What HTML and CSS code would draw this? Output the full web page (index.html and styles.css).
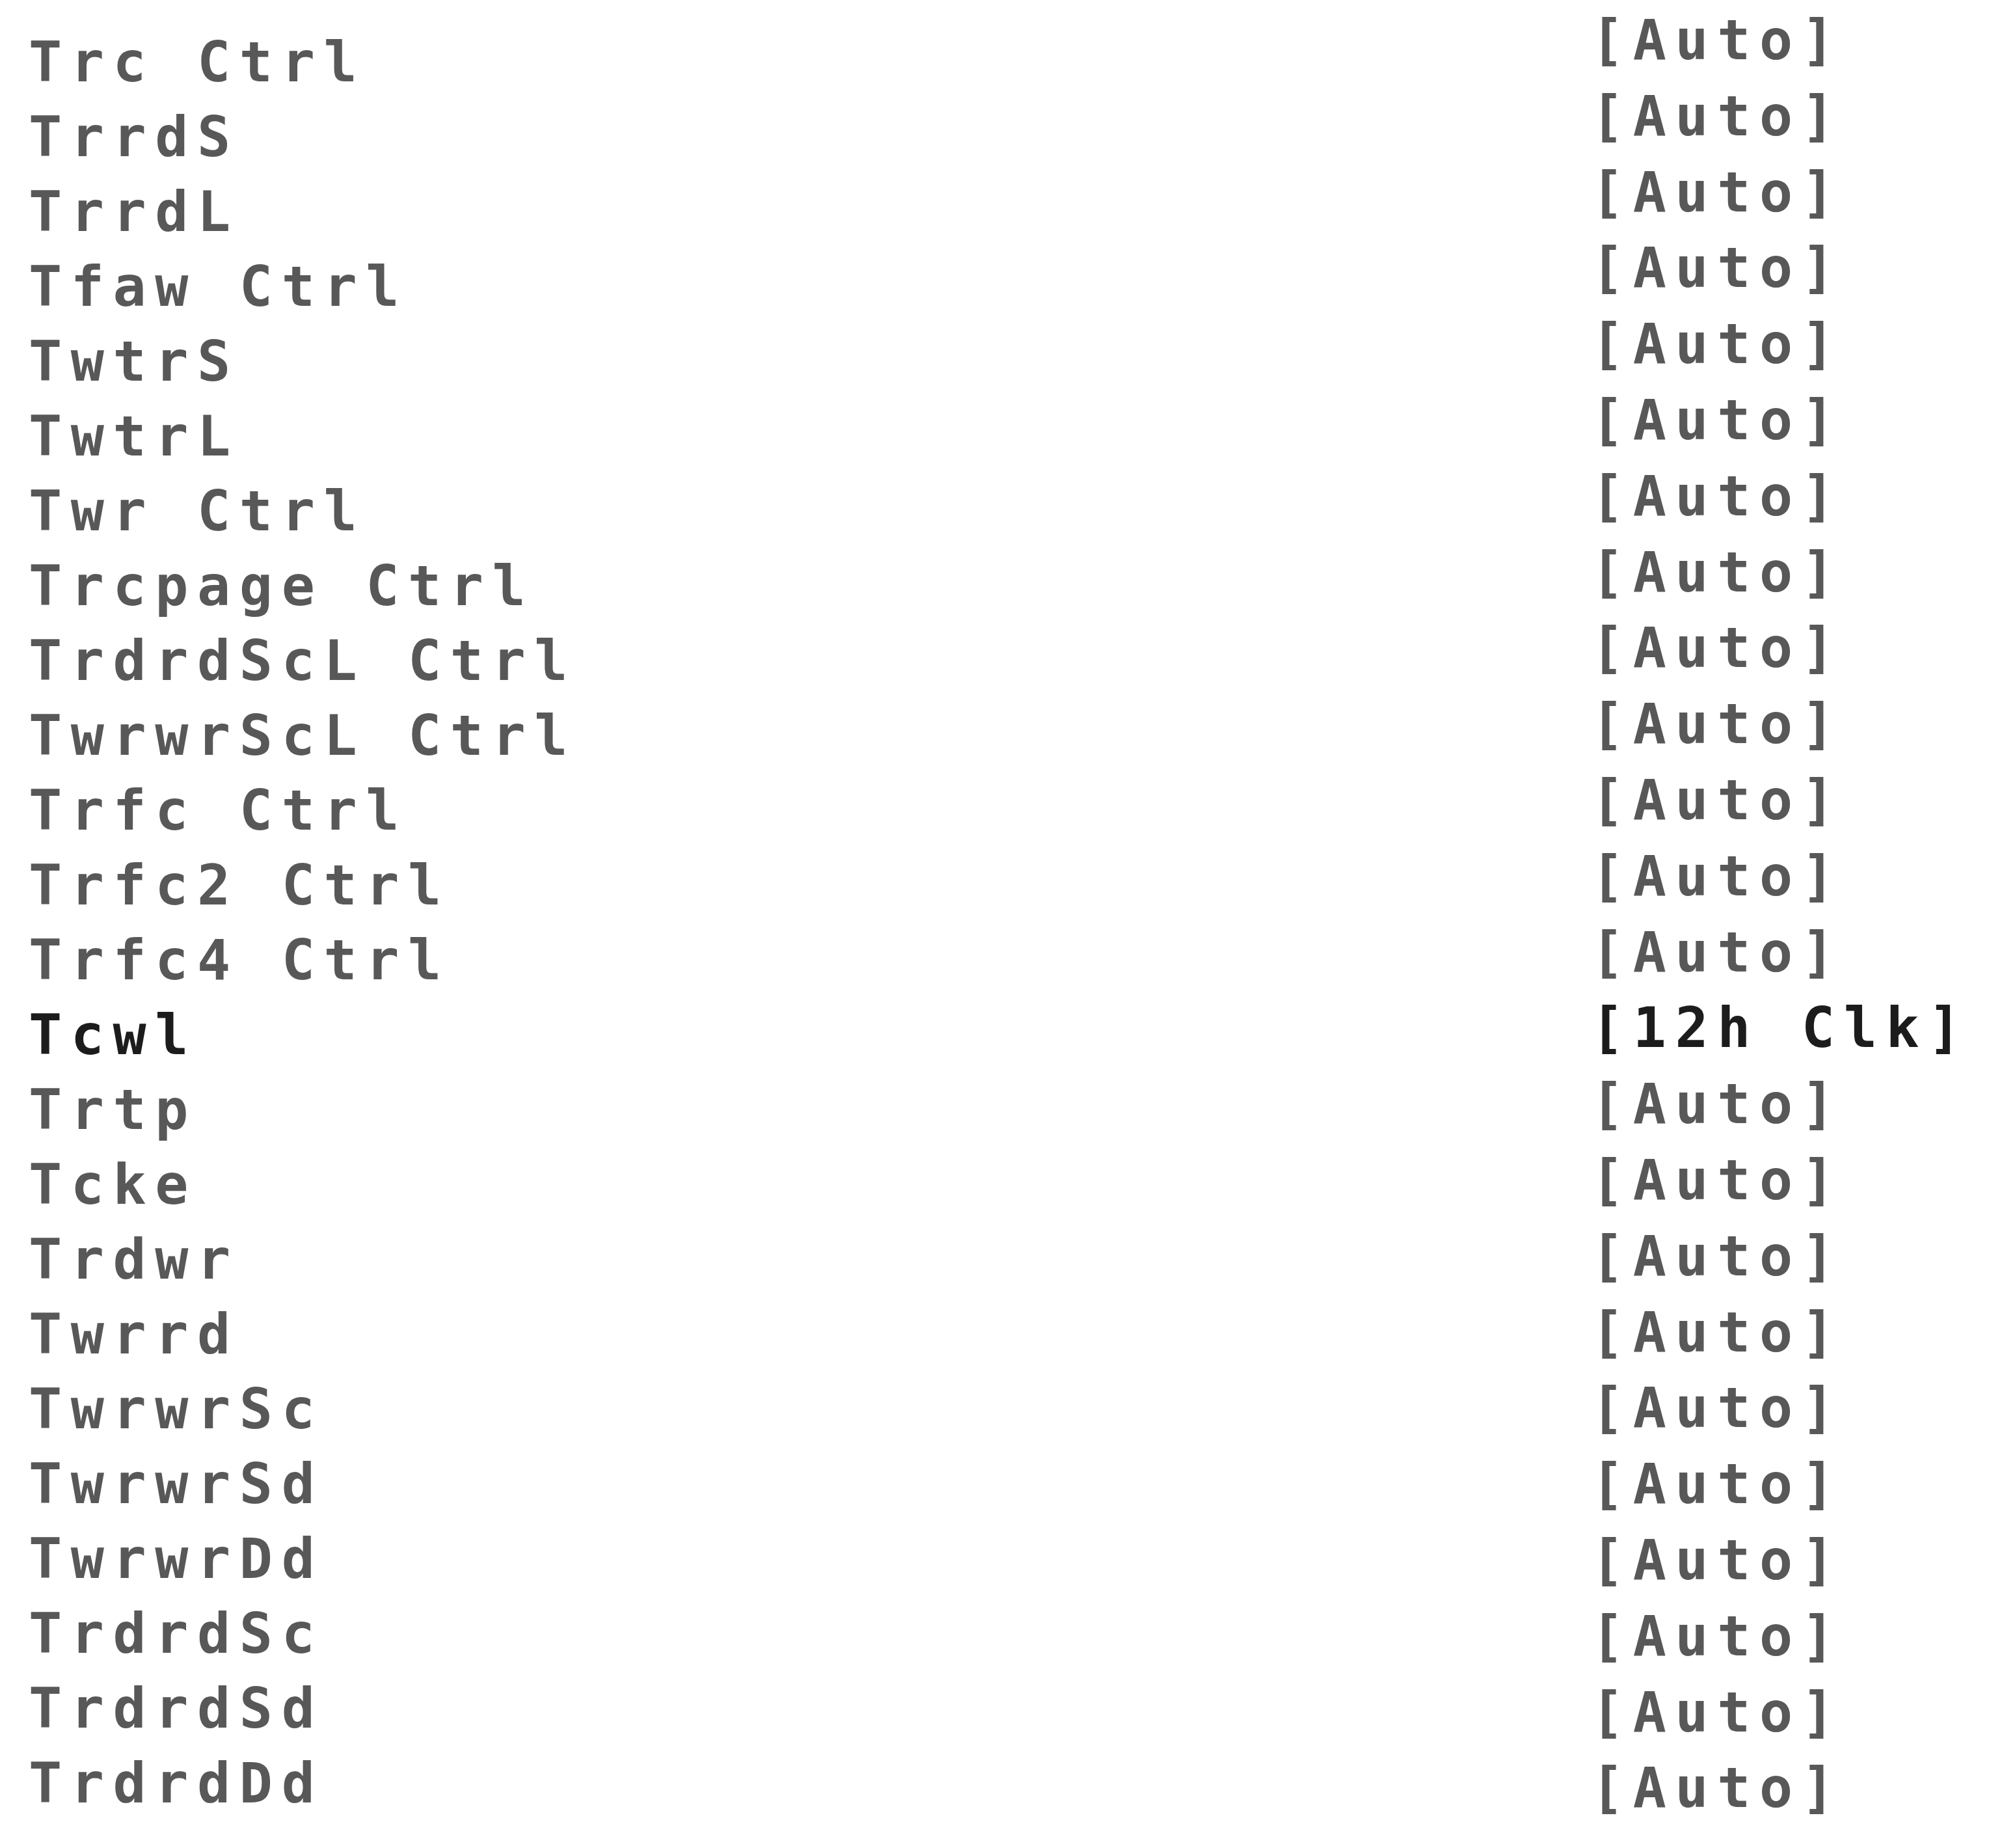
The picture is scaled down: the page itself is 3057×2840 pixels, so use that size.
FILE: index.html
```html
<!DOCTYPE html>
<html>
<head>
<meta charset="utf-8">
<link rel="stylesheet" href="styles.css">
</head>
<body>
<div class="screen">
  <ul class="labels">
    <li>Trc Ctrl</li>
    <li>TrrdS</li>
    <li>TrrdL</li>
    <li>Tfaw Ctrl</li>
    <li>TwtrS</li>
    <li>TwtrL</li>
    <li>Twr Ctrl</li>
    <li>Trcpage Ctrl</li>
    <li>TrdrdScL Ctrl</li>
    <li>TwrwrScL Ctrl</li>
    <li>Trfc Ctrl</li>
    <li>Trfc2 Ctrl</li>
    <li>Trfc4 Ctrl</li>
    <li class="active">Tcwl</li>
    <li>Trtp</li>
    <li>Tcke</li>
    <li>Trdwr</li>
    <li>Twrrd</li>
    <li>TwrwrSc</li>
    <li>TwrwrSd</li>
    <li>TwrwrDd</li>
    <li>TrdrdSc</li>
    <li>TrdrdSd</li>
    <li>TrdrdDd</li>
  </ul>
  <ul class="values">
    <li>[Auto]</li>
    <li>[Auto]</li>
    <li>[Auto]</li>
    <li>[Auto]</li>
    <li>[Auto]</li>
    <li>[Auto]</li>
    <li>[Auto]</li>
    <li>[Auto]</li>
    <li>[Auto]</li>
    <li>[Auto]</li>
    <li>[Auto]</li>
    <li>[Auto]</li>
    <li>[Auto]</li>
    <li class="active">[12h Clk]</li>
    <li>[Auto]</li>
    <li>[Auto]</li>
    <li>[Auto]</li>
    <li>[Auto]</li>
    <li>[Auto]</li>
    <li>[Auto]</li>
    <li>[Auto]</li>
    <li>[Auto]</li>
    <li>[Auto]</li>
    <li>[Auto]</li>
  </ul>
</div>
</body>
</html>
```
FILE: styles.css
```css
html, body {
  margin: 0;
  padding: 0;
  background: #ffffff;
}

.screen {
  display: flex;
  width: 3057px;
  height: 2840px;
  font-family: "DejaVu Sans Mono", "Liberation Mono", monospace;
  font-weight: bold;
  font-size: 85px;
  letter-spacing: 13.6px;
  color: #585858;
}

.labels,
.values {
  list-style: none;
  margin: 0;
}

.labels li,
.values li {
  white-space: pre;
}

.labels {
  width: 2400px;
  box-sizing: border-box;
  padding: 38px 0 0 44px;
  line-height: 115px;
}

.values {
  padding: 4px 0 0 45px;
  line-height: 116.8px;
}

.active {
  color: #1c1c1c;
}
```
